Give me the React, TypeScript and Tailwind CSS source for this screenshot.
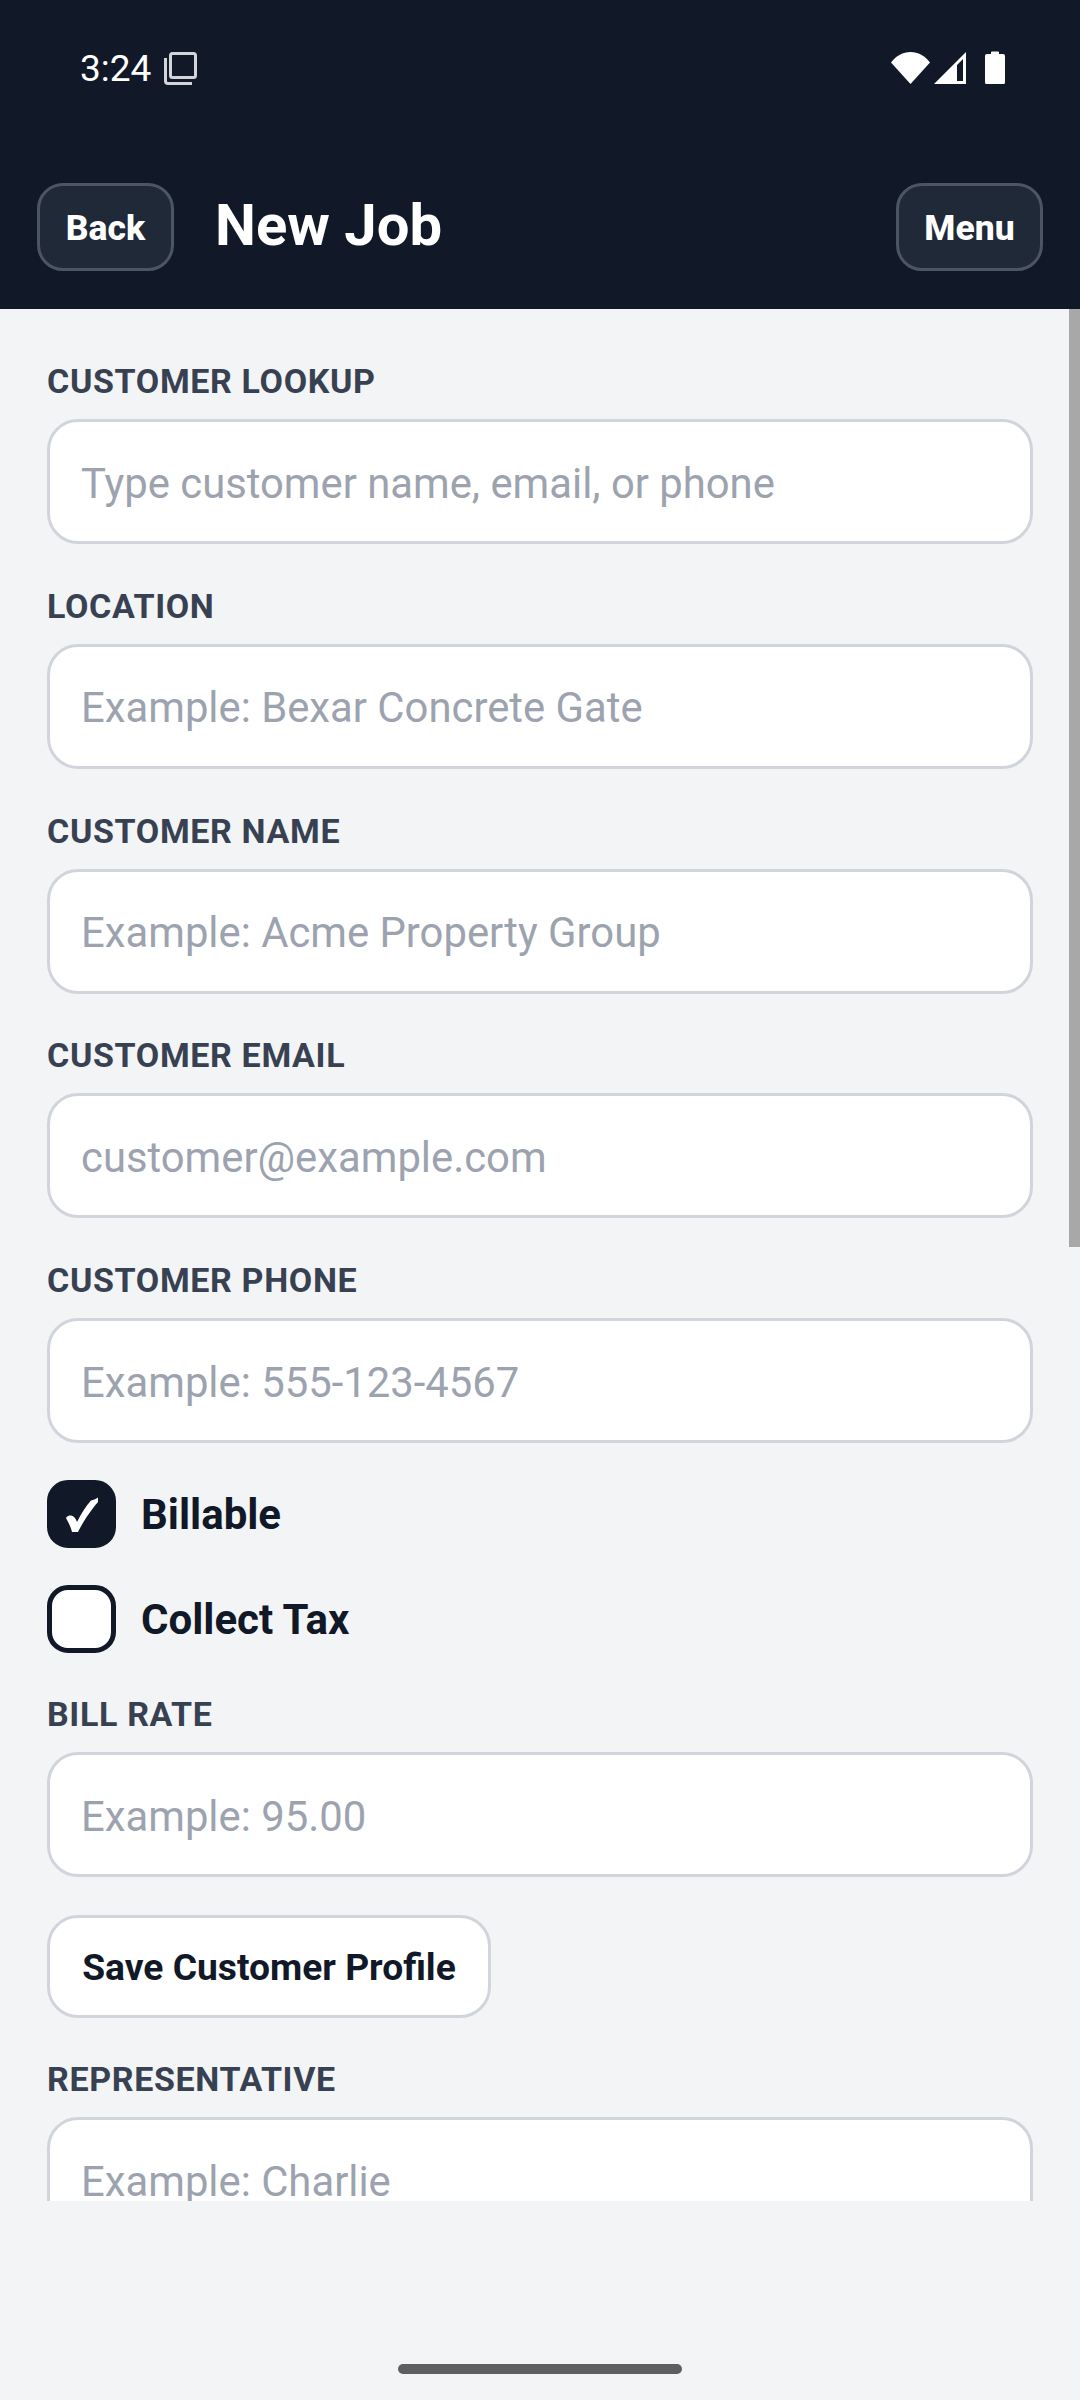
import React from 'react';

const Field = ({ label, placeholder, className = '' }: { label: string; placeholder: string; className?: string }) => (
  <div className={className}>
    <label className="block h-[40px] text-[34px] leading-[40px] font-bold tracking-[0.65px] text-[#374151]">{label}</label>
    <input
      readOnly
      placeholder={placeholder}
      className="mt-[18px] block h-[125px] w-full rounded-[31px] border-[3px] border-[#d1d5db] bg-white px-[31px] pt-[3px] text-[41.800px] text-[#111827] outline-none placeholder:text-[#9ca3af]"
    />
  </div>
);

const Check = ({ label, checked }: { label: string; checked?: boolean }) => (
  <div className="flex h-[68px] items-center gap-[25px]">
    <span
      className={`flex h-[68px] w-[69px] items-center justify-center rounded-[21px] border-[5px] border-[#111827] ${
        checked ? 'bg-[#111827]' : 'bg-white'
      }`}
    >
      {checked && (
        <svg width="32" height="35" viewBox="0 0 32 35" fill="#fff">
          <path d="M0 21C1 19 3 18.500 5 18.500C8 19 10 22 11 25C15 17 20 9 25 3.500C27 3 30 2 32 .5L32 5C25 13 17 25 12 35L6 35C5 30 2 25 0 21Z" />
        </svg>
      )}
    </span>
    <span className="pt-[1px] text-[42px] font-bold text-[#111827]">{label}</span>
  </div>
);

const HeaderButton = ({ label, className = '' }: { label: string; className?: string }) => (
  <button className={`h-[88px] rounded-[26px] border-[3px] border-[#4b5563] bg-[#1f2937] pt-[3px] text-[35.500px] font-extrabold text-white ${className}`}>
    {label}
  </button>
);

const StatusBar = () => (
  <div className="flex h-[183px] items-start justify-between pt-[51px] pr-[75px] pl-[80px]">
    <div className="flex h-[34px] items-center gap-[13px]">
      <span className="text-[37px] leading-none text-white">3:24</span>
      <svg width="33" height="33" viewBox="0 0 33 33" fill="none" stroke="#d1d5db" strokeWidth="3">
        <rect x="6.500" y="1.500" width="25" height="24" rx="2" />
        <path d="M1.500 6v23a2.500 2.500 0 0 0 2.500 2.500h24" />
      </svg>
    </div>
    <div className="flex items-center">
      <svg width="39" height="32" viewBox="0 0 39 32" fill="#fff">
        <path d="M0 10.500C5 4 12 0 19.500 0S34 4 39 10.500L19.500 32Z" />
      </svg>
      <svg className="ml-[4px]" width="32" height="32" viewBox="0 0 32 32">
        <path fillRule="evenodd" fill="#fff" d="M32 0v32H0ZM29 7 23 13v16h6Z" />
      </svg>
      <svg className="ml-[19px]" width="20" height="33" viewBox="0 0 20 33" fill="#fff">
        <path d="M6 1.500a1 1 0 0 1 1-1h6a1 1 0 0 1 1 1V3h4a2 2 0 0 1 2 2v26.500a1.500 1.500 0 0 1-1.500 1.500H1.500A1.500 1.500 0 0 1 0 31.500V5a2 2 0 0 1 2-2h4Z" />
      </svg>
    </div>
  </div>
);

export default function App() {
  return (
    <div className="relative flex h-[2400px] w-[1080px] flex-col overflow-hidden bg-[#f3f4f6] font-['Roboto',sans-serif]">
      <header className="h-[309px] shrink-0 bg-[#111827]">
        <StatusBar />
        <div className="flex items-center pr-[37px] pl-[37px]">
          <HeaderButton label="Back" className="w-[137px]" />
          <h1 className="mb-[5px] ml-[41px] text-[58px] leading-none font-bold text-white">New Job</h1>
          <HeaderButton label="Menu" className="ml-auto w-[147px]" />
        </div>
      </header>

      <main className="h-[1892px] shrink-0 overflow-hidden px-[47px] pt-[52px]">
        <div className="flex flex-col gap-[41.750px]">
          <Field label="CUSTOMER LOOKUP" placeholder="Type customer name, email, or phone" />
          <Field label="LOCATION" placeholder="Example: Bexar Concrete Gate" />
          <Field label="CUSTOMER NAME" placeholder="Example: Acme Property Group" />
          <Field label="CUSTOMER EMAIL" placeholder="customer@example.com" />
          <Field label="CUSTOMER PHONE" placeholder="Example: 555-123-4567" />
        </div>
        <div className="mt-[37px] flex flex-col gap-[37px]">
          <Check label="Billable" checked />
          <Check label="Collect Tax" />
        </div>
        <Field label="BILL RATE" placeholder="Example: 95.00" className="mt-[41px]" />
        <button className="mt-[38px] block h-[103px] w-[444px] rounded-[31px] border-[3px] border-[#d1d5db] bg-white pt-[2px] text-[37.200px] font-bold text-[#111827]">
          Save Customer Profile
        </button>
        <Field label="REPRESENTATIVE" placeholder="Example: Charlie" className="mt-[41px]" />
      </main>

      <div className="absolute top-[309px] right-0 h-[938px] w-[11px] bg-[#a8a8a8]" />
      <div className="absolute top-[2364px] left-[398px] h-[10px] w-[284px] rounded-full bg-[#5f5f5f]" />
    </div>
  );
}
